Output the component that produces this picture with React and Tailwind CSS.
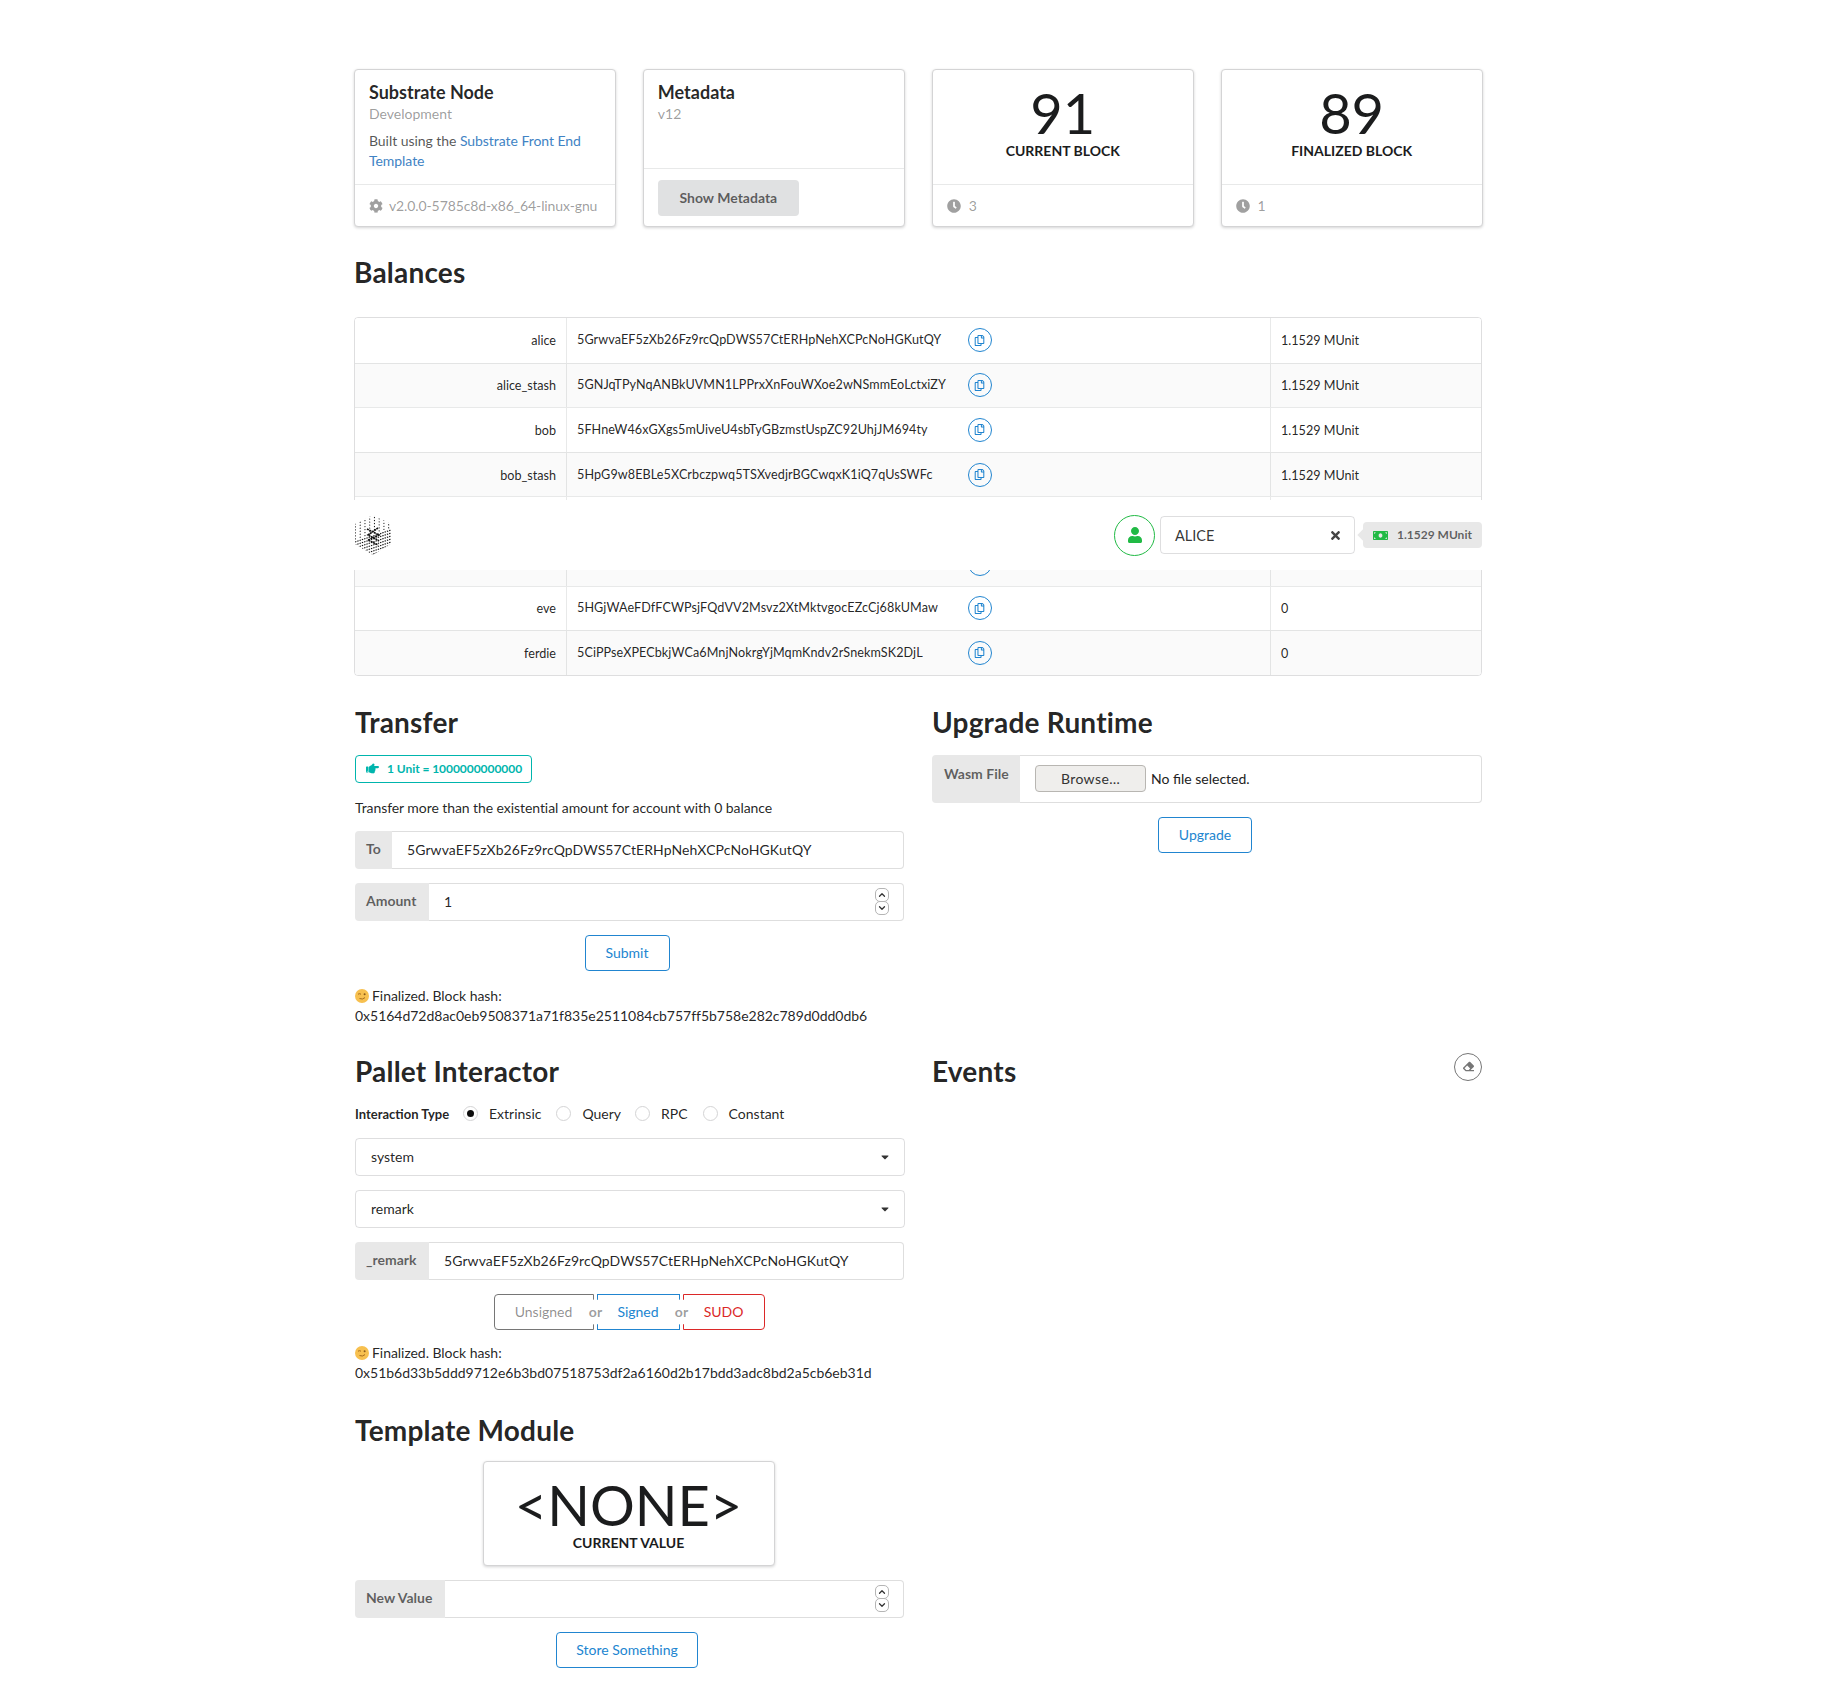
import React from "react";
import { FaCog, FaClock, FaRegCopy, FaUser, FaTimes, FaMoneyBill, FaHandPointRight, FaEraser, FaCaretDown } from "react-icons/fa";
import { ChevronUp, ChevronDown } from "lucide-react";

const rows = [
  ["alice", "5GrwvaEF5zXb26Fz9rcQpDWS57CtERHpNehXCPcNoHGKutQY", "1.1529 MUnit"],
  ["alice_stash", "5GNJqTPyNqANBkUVMN1LPPrxXnFouWXoe2wNSmmEoLctxiZY", "1.1529 MUnit"],
  ["bob", "5FHneW46xGXgs5mUiveU4sbTyGBzmstUspZC92UhjJM694ty", "1.1529 MUnit"],
  ["bob_stash", "5HpG9w8EBLe5XCrbczpwq5TSXvedjrBGCwqxK1iQ7qUsSWFc", "1.1529 MUnit"],
  ["charlie", "5FLSigC9HGRKVhB9FiEo4Y3koPsNmBmLJbpXg2mp1hXcS59Y", "0"],
  ["dave", "5DAAnrj7VHTznn2AWBemMuyBwZWs6FNFjdyVXUeYum3PTXFy", "0"],
  ["eve", "5HGjWAeFDfFCWPsjFQdVV2Msvz2XtMktvgocEZcCj68kUMaw", "0"],
  ["ferdie", "5CiPPseXPECbkjWCa6MnjNokrgYjMqmKndv2rSnekmSK2DjL", "0"],
];

function Logo() {
  const lines = [];
  for (let i = -6; i < 22; i++) {
    const y = i * 3;
    lines.push(<line key={i} x1="0" y1={y + 12} x2="36" y2={y} stroke="#111" strokeWidth="1.1" strokeDasharray={i < 5 ? "1 4" : "1.4 1"} />);
  }
  return (
    <svg width="36" height="40" viewBox="0 0 36 40" className="block">
      <defs>
        <clipPath id="hexclip"><polygon points="18,0 36,9 36,29 18,40 0,29 0,9" /></clipPath>
      </defs>
      <g clipPath="url(#hexclip)">{lines}</g>
      <path d="M12 14 L24 20 L13 25 L23 30 M23 13 L13 20 L24 26" fill="none" stroke="#111" strokeWidth="1.6" strokeDasharray="2 0.6" />
    </svg>
  );
}

function Wink() {
  return (
    <svg width="14" height="14" viewBox="0 0 14 14" className="inline-block align-[-2px] mr-[3px]">
      <circle cx="7" cy="7" r="7" fill="#f7c04f" />
      <path d="M3 5.2 Q4.5 4.2 6 5.2" fill="none" stroke="#a56a1c" strokeWidth="1" />
      <circle cx="9.6" cy="5.2" r="1" fill="#8a5a1a" />
      <path d="M4.5 9.5 Q7.5 11 10 8.6" fill="none" stroke="#a56a1c" strokeWidth="1" />
    </svg>
  );
}

function Spinner() {
  return (
    <div className="absolute right-[15px] top-[5px] flex flex-col items-center">
      <span className="w-[14px] h-[14px] rounded-[5px] border border-[#b5b5b5] bg-white flex items-center justify-center">
        <ChevronUp size={10} strokeWidth={3} color="#333" />
      </span>
      <span className="w-[14px] h-[14px] -mt-[1px] rounded-[5px] border border-[#b5b5b5] bg-white flex items-center justify-center">
        <ChevronDown size={10} strokeWidth={3} color="#333" />
      </span>
    </div>
  );
}

function LabeledInput({ label, value, labelW, spinner }) {
  return (
    <div className="relative flex h-[38px] w-[549px] mb-[14px]">
      <div className={`${labelW} shrink-0 flex items-center pl-[11px] rounded-l-[4px] bg-[#e8e8e8] text-[rgba(0,0,0,0.6)] font-bold pb-[2px]`}>{label}</div>
      <div className="flex-1 flex items-center pl-[15px] tracking-[0.09px] border border-l-0 border-[rgba(34,36,38,0.15)] rounded-r-[4px] text-[rgba(0,0,0,0.87)]">{value}</div>
      {spinner && <Spinner />}
    </div>
  );
}

function BlueButton({ children, w, offset }) {
  return (
    <div className={`flex justify-center ${offset}`}>
      <button className={`${w} h-[36px] rounded-[4px] border border-[#2185d0] text-[#2185d0] bg-white font-normal`}>{children}</button>
    </div>
  );
}

function SelectBox({ value }) {
  return (
    <div className="flex items-center justify-between h-[38px] w-[550px] mb-[14px] pl-[15px] pr-[13px] border border-[rgba(34,36,38,0.15)] rounded-[4px] text-[rgba(0,0,0,0.87)]">
      <span>{value}</span>
      <FaCaretDown size={12} color="#333" />
    </div>
  );
}

function Radio({ label, checked, ml }) {
  return (
    <div className={`flex items-center ${ml}`}>
      <span className="w-[15px] h-[15px] rounded-full border border-[#d4d4d5] flex items-center justify-center">
        {checked && <span className="w-[7px] h-[7px] rounded-full bg-[rgba(0,0,0,0.95)]" />}
      </span>
      <span className="ml-[11px] text-[rgba(0,0,0,0.87)]">{label}</span>
    </div>
  );
}

function Or() {
  return (
    <span className="relative z-10 w-[3px] shrink-0">
      <span className="absolute left-1/2 top-1/2 -translate-x-1/2 -translate-y-1/2 w-[25px] h-[25px] rounded-full bg-white flex items-center justify-center text-[rgba(0,0,0,0.4)] font-bold pb-[1px] pl-[1px]">or</span>
    </span>
  );
}

const cardCls = "rounded-[4px] bg-white border border-[#d4d4d5] shadow-[0_1px_3px_0_#d4d4d5] flex flex-col";
const h1Cls = "h-[36px] text-[28px] leading-[36px] font-bold tracking-[0.2px] text-[rgba(0,0,0,0.87)]";

function StatCard({ value, label, ago }) {
  return (
    <div className={`${cardCls} h-[158px]`}>
      <div className="h-[115px] border-b border-[rgba(34,36,38,0.1)] pt-[15px] text-center text-[#1b1c1d]">
        <div className="text-[56px] leading-[56px]">{value}</div>
        <div className="font-bold leading-[20px]">{label}</div>
      </div>
      <div className="flex-1 flex items-center pl-[14px] text-[rgba(0,0,0,0.4)]">
        <FaClock size={14} color="#a0a0a0" />
        <span className="ml-[8px]">{ago}</span>
      </div>
    </div>
  );
}

export default function App() {
  return (
    <div className="relative min-h-[1695px] bg-white text-[14px] leading-[20px] text-[rgba(0,0,0,0.87)] [font-family:Lato,sans-serif]">
      <div className="absolute left-0 right-0 top-[500px] h-[70px] z-20 bg-white">
        <div className="w-[1128px] mx-auto h-full flex items-center justify-between">
          <div className="pl-[1px]"><Logo /></div>
          <div className="flex items-center">
            <div className="w-[41px] h-[41px] rounded-full border border-[#21ba45] flex items-center justify-center">
              <FaUser size={16} color="#21ba45" />
            </div>
            <div className="ml-[5px] w-[195px] h-[38px] rounded-[4px] border border-[rgba(34,36,38,0.15)] flex items-center justify-between pl-[14px] pr-[12px] text-[rgba(0,0,0,0.8)]">
              <span className="mt-[2px] text-[14.5px]">ALICE</span>
              <FaTimes size={13} color="#444" />
            </div>
            <div className="relative ml-[8px] w-[119px] h-[26px] rounded-[4px] bg-[#e8e8e8] flex items-center pl-[10px] text-[12px] font-bold text-[rgba(0,0,0,0.6)]">
              <span className="absolute -left-[4px] top-[9px] w-[8px] h-[8px] rotate-45 bg-[#e8e8e8]" />
              <FaMoneyBill size={15} color="#21ba45" />
              <span className="ml-[9px]">1.1529 MUnit</span>
            </div>
          </div>
        </div>
      </div>

      <div className="w-[1128px] mx-auto pt-[69px]">
        <div className="grid grid-cols-4 gap-x-[26.7px] w-[1128.7px]">
          <div className={`${cardCls} h-[158px]`}>
            <div className="h-[115px] border-b border-[rgba(34,36,38,0.1)] px-[14px] pt-[11px]">
              <div className="text-[18px] leading-[23px] font-bold text-[rgba(0,0,0,0.85)]">Substrate Node</div>
              <div className="text-[rgba(0,0,0,0.4)] leading-[20px]">Development</div>
              <div className="text-[rgba(0,0,0,0.68)] mt-[7px] tracking-[-0.05px]">Built using the <span className="text-[#4183c4]">Substrate Front End Template</span></div>
            </div>
            <div className="flex-1 flex items-center pl-[14px] text-[rgba(0,0,0,0.4)]">
              <FaCog size={14} color="#a0a0a0" />
              <span className="ml-[6px] tracking-[-0.11px]">v2.0.0-5785c8d-x86_64-linux-gnu</span>
            </div>
          </div>
          <div className={`${cardCls} h-[158px]`}>
            <div className="h-[99px] border-b border-[rgba(34,36,38,0.1)] px-[14px] pt-[11px]">
              <div className="text-[18px] leading-[23px] font-bold text-[rgba(0,0,0,0.85)]">Metadata</div>
              <div className="text-[rgba(0,0,0,0.4)]">v12</div>
            </div>
            <div className="flex-1 pl-[14px] pt-[11px]">
              <button className="w-[141px] h-[36px] rounded-[4px] bg-[#e0e1e2] text-[rgba(0,0,0,0.6)] font-bold">Show Metadata</button>
            </div>
          </div>
          <StatCard value="91" label="CURRENT BLOCK" ago="3" />
          <StatCard value="89" label="FINALIZED BLOCK" ago="1" />
        </div>

        <h1 className={`mt-[27px] ${h1Cls}`}>Balances</h1>

        <div className="mt-[27px] border border-[rgba(34,36,38,0.15)] rounded-[4px] overflow-hidden text-[12.6px]">
          <table className="w-full border-separate border-spacing-0 table-fixed">
            <colgroup>
              <col className="w-[211px]" />
              <col className="w-[704px]" />
              <col />
            </colgroup>
            <tbody>
              {rows.map((r, i) => (
                <tr key={r[0]} className={`h-[44.6px] ${i % 2 === 1 ? "bg-[#fafafa]" : "bg-white"}`}>
                  <td className={`text-right pr-[10px] pt-[2px] ${i ? "border-t border-[rgba(34,36,38,0.1)]" : ""}`}>{r[0]}</td>
                  <td className={`pl-[10px] border-l border-[rgba(34,36,38,0.1)] ${i ? "border-t border-[rgba(34,36,38,0.1)]" : ""}`}>
                    <div className="flex items-center">
                      <span className="inline-block w-[390.6px] tracking-[0.09px]">{r[1]}</span>
                      <span className="w-[24px] h-[24px] rounded-full border border-[#2185d0] flex items-center justify-center">
                        <FaRegCopy size={11} color="#2185d0" />
                      </span>
                    </div>
                  </td>
                  <td className={`pl-[10px] pt-[2px] border-l border-[rgba(34,36,38,0.1)] ${i ? "border-t border-[rgba(34,36,38,0.1)]" : ""}`}>{r[2]}</td>
                </tr>
              ))}
            </tbody>
          </table>
        </div>

        <div className="mt-[28px] grid grid-cols-2 gap-x-[27px] pl-[1px]">
          <section className="h-[349px]">
            <h1 className={h1Cls}>Transfer</h1>
            <div className="mt-[15px] w-[177px] h-[28px] rounded-[4px] border border-[#00b5ad] flex items-center pl-[10px] text-[12px] font-bold text-[#00b5ad]">
              <FaHandPointRight size={13} color="#00b5ad" />
              <span className="ml-[8px] tracking-[-0.05px]">1 Unit = 1000000000000</span>
            </div>
            <p className="mt-[15px] mb-[13px] tracking-[-0.07px]">Transfer more than the existential amount for account with 0 balance</p>
            <LabeledInput label="To" labelW="w-[37px]" value="5GrwvaEF5zXb26Fz9rcQpDWS57CtERHpNehXCPcNoHGKutQY" />
            <LabeledInput label="Amount" labelW="w-[74px]" value="1" spinner />
            <BlueButton w="w-[85px]" offset="pr-[6px]">Submit</BlueButton>
            <div className="mt-[15px] tracking-[-0.05px]"><Wink />Finalized. Block hash:</div>
            <div className="tracking-[-0.02px]">0x5164d72d8ac0eb9508371a71f835e2511084cb757ff5b758e282c789d0dd0db6</div>
          </section>
          <section className="h-[349px]">
            <h1 className={h1Cls}>Upgrade Runtime</h1>
            <div className="mt-[15px] flex h-[48px] mb-[14px]">
              <div className="w-[88px] shrink-0 rounded-l-[4px] bg-[#e8e8e8] pl-[12px] pt-[9px] font-bold text-[rgba(0,0,0,0.6)]">Wasm File</div>
              <div className="flex-1 flex items-center pl-[15px] border border-l-0 border-[rgba(34,36,38,0.15)] rounded-r-[4px] text-[#222]">
                <button className="w-[111px] h-[27px] rounded-[4px] border border-[#b8b6b2] bg-[#efeeec] text-[#333] text-[14px] leading-[20px] tracking-[0.4px]">Browse…</button>
                <span className="ml-[5px]">No file selected.</span>
              </div>
            </div>
            <BlueButton w="w-[94px]" offset="pr-[4px]">Upgrade</BlueButton>
          </section>

          <section className="h-[359px]">
            <h1 className={h1Cls}>Pallet Interactor</h1>
            <div className="mt-[15px] flex items-center h-[20px] mb-[14px]">
              <span className="w-[108px] text-[13px] font-bold">Interaction Type</span>
              <Radio label="Extrinsic" checked />
              <Radio label="Query" ml="ml-[15px]" />
              <Radio label="RPC" ml="ml-[14px]" />
              <Radio label="Constant" ml="ml-[15px]" />
            </div>
            <SelectBox value="system" />
            <SelectBox value="remark" />
            <LabeledInput label="_remark" labelW="w-[74px]" value="5GrwvaEF5zXb26Fz9rcQpDWS57CtERHpNehXCPcNoHGKutQY" />
            <div className="flex justify-center pr-[2px]">
              <div className="flex h-[36px]">
                <button className="w-[100px] rounded-l-[4px] border border-[#767676] text-[rgba(0,0,0,0.45)]">Unsigned</button>
                <Or />
                <button className="w-[83px] border border-[#2185d0] text-[#2185d0]">Signed</button>
                <Or />
                <button className="w-[82px] rounded-r-[4px] border border-[#db2828] text-[#db2828]">SUDO</button>
              </div>
            </div>
            <div className="mt-[13px] tracking-[-0.05px]"><Wink />Finalized. Block hash:</div>
            <div className="tracking-[-0.02px]">0x51b6d33b5ddd9712e6b3bd07518753df2a6160d2b17bdd3adc8bd2a5cb6eb31d</div>
          </section>
          <section className="h-[359px] relative">
            <h1 className={h1Cls}>Events</h1>
            <span className="absolute right-0 top-0 w-[28px] h-[28px] rounded-full border border-[#767676] flex items-center justify-center">
              <FaEraser size={11} color="#767676" />
            </span>
          </section>

          <section>
            <h1 className={h1Cls}>Template Module</h1>
            <div className="flex justify-center mt-[13px] mb-[14px] pr-[3px]">
              <div className={`${cardCls} w-[292px] h-[105px] items-center pt-[15px] text-[#1b1c1d]`}>
                <div className="text-[56px] leading-[56px]">&lt;NONE&gt;</div>
                <div className="font-bold">CURRENT VALUE</div>
              </div>
            </div>
            <LabeledInput label="New Value" labelW="w-[90px]" value="" spinner />
            <BlueButton w="w-[142px]" offset="pr-[6px]">Store Something</BlueButton>
          </section>
        </div>
      </div>
    </div>
  );
}
